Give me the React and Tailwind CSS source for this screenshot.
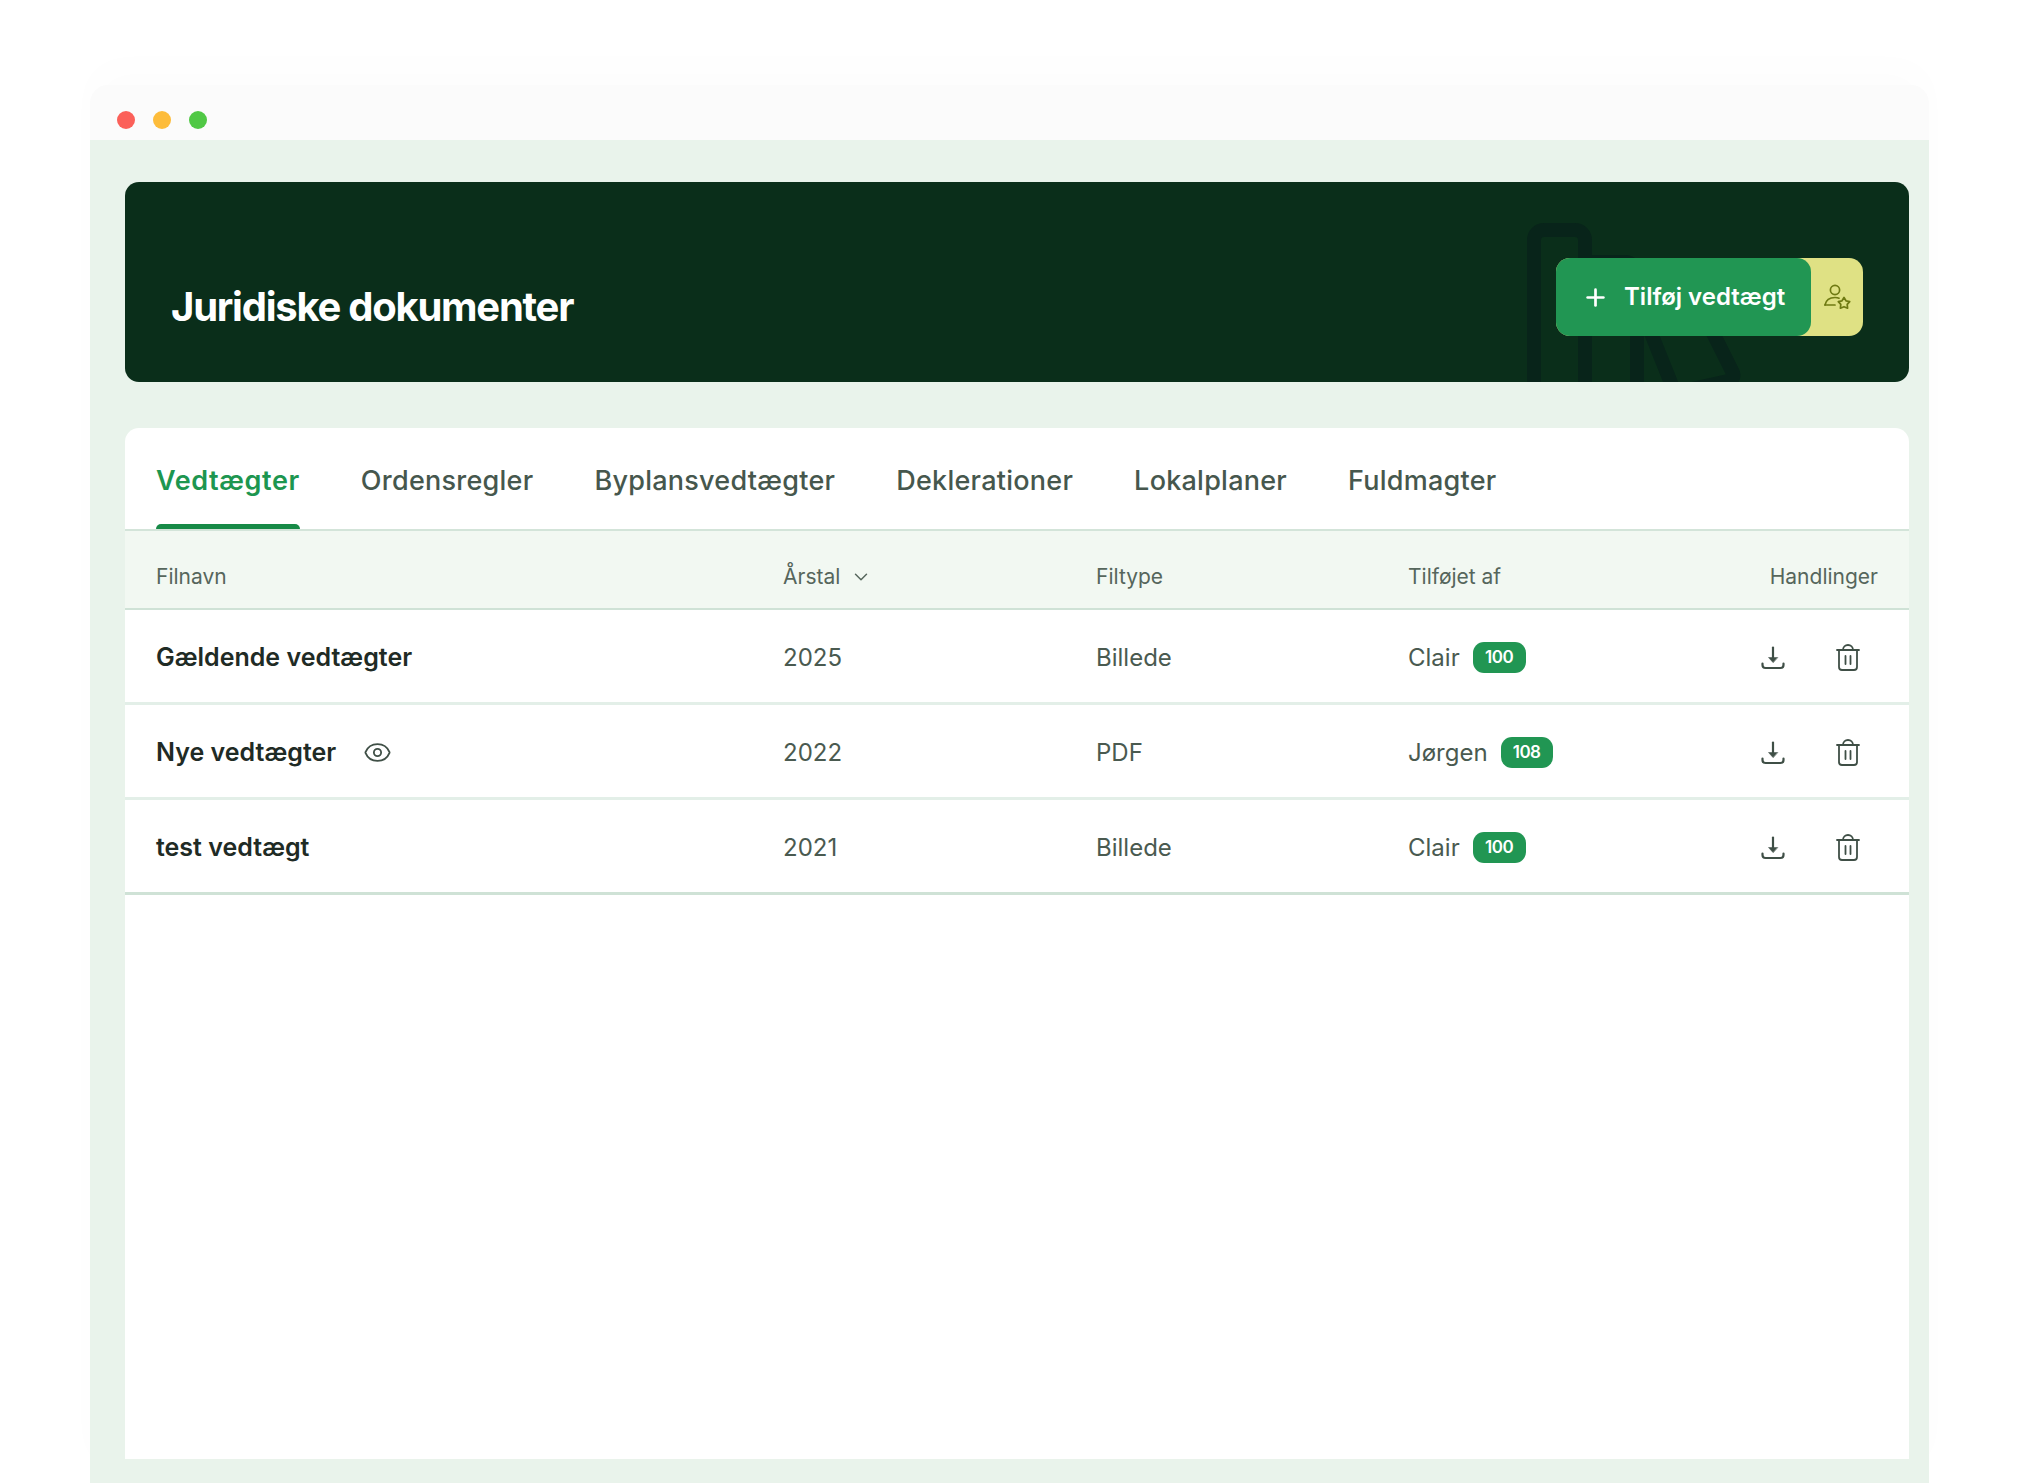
import { ChevronDown, Eye, Plus } from 'lucide-react';

const rows = [
  { navn: 'Gældende vedtægter', aar: '2025', type: 'Billede', af: 'Clair', nr: '100' },
  { navn: 'Nye vedtægter', aar: '2022', type: 'PDF', af: 'Jørgen', nr: '108', eye: true },
  { navn: 'test vedtægt', aar: '2021', type: 'Billede', af: 'Clair', nr: '100', last: true },
];

const tabs = ['Vedtægter', 'Ordensregler', 'Byplansvedtægter', 'Deklerationer', 'Lokalplaner', 'Fuldmagter'];

function DownloadIcon() {
  return (
    <svg width="24" height="24" viewBox="0 0 24 24" fill="none" stroke="#3f4f46" strokeWidth="2.2" strokeLinecap="round">
      <path d="M12 1.500v12" />
      <path d="M12 16.500l-4.500-5h9z" fill="#3f4f46" strokeWidth="0.5" strokeLinejoin="round" />
      <path d="M1.500 17.500v1.500a3 3 0 0 0 3 3h15a3 3 0 0 0 3-3v-1.500" />
    </svg>
  );
}

function TrashIcon() {
  return (
    <svg width="24" height="27" viewBox="0 0 24 27" fill="none" stroke="#3f4f46" strokeWidth="1.8" strokeLinecap="round" strokeLinejoin="round">
      <path d="M1 6h22" />
      <path d="M7 6a5 5 0 0 1 10 0" />
      <path d="M3 6v17a3 3 0 0 0 3 3h12a3 3 0 0 0 3-3V6" />
      <path d="M9.500 12v8M14.500 12v8" />
    </svg>
  );
}

function UserStarIcon() {
  return (
    <svg width="27" height="27" viewBox="0 0 27 27" fill="none" stroke="#6f7a12" strokeWidth="1.7" strokeLinecap="round" strokeLinejoin="round">
      <circle cx="11" cy="6" r="4.6" />
      <path d="M1 21c1-5 5-7.500 10-7.500 1.500 0 3 .2 4 .7" />
      <path d="M1 21h10" />
      <path d="M20 13.500l2 3.300 3.700.8-2.500 2.800.4 3.800-3.600-1.500-3.600 1.500.4-3.800-2.500-2.800 3.700-.8z" />
    </svg>
  );
}

function Badge({ nr }) {
  return (
    <span
      className={`flex h-[31px] items-center justify-center rounded-[11px] bg-[#219653] text-[17px] font-semibold tracking-[-0.5px] text-white ${
        nr === '108' ? 'w-[52px]' : 'w-[53px]'
      }`}
    >
      {nr}
    </span>
  );
}

export default function App() {
  return (
    <div className="h-[1484px] overflow-hidden bg-white pt-[85px] font-['Inter',sans-serif]">
      <div className="ml-[90px] w-[1839px] rounded-t-[18px] shadow-[0_-20px_40px_rgba(0,0,0,0.012)]">
        <div className="flex h-[55px] gap-[18px] rounded-t-[18px] bg-[#fbfbfb] pl-[27px] pt-[26px]">
          <span className="h-[18px] w-[18px] rounded-full bg-[#fb6059]" />
          <span className="h-[18px] w-[18px] rounded-full bg-[#fdbc3a]" />
          <span className="h-[18px] w-[18px] rounded-full bg-[#50c845]" />
        </div>

        <div className="flex h-[1343px] flex-col bg-[#e9f3eb] pb-[24px] pl-[35px] pr-[20px] pt-[42px]">
          <header className="relative flex h-[200px] shrink-0 items-center justify-between overflow-hidden rounded-[14px] bg-[#0a2e1a] pl-[46px] pr-[46px]">
            <h1 className="mt-[50px] text-[40px] font-bold tracking-[-1.25px] text-white">Juridiske dokumenter</h1>

            <svg className="absolute left-[1395px] top-[33px]" width="240" height="167" viewBox="0 0 240 167" fill="none" stroke="#08241a" strokeWidth="14" strokeLinejoin="round">
              <path d="M14 175V25a10 10 0 0 1 10-10h31a10 10 0 0 1 10 10v150" />
              <path d="M65 47h40a12 12 0 0 1 12 12v116" />
              <path d="M140 60l15-8 13 2 20 60" />
              <path d="M131 118l22 55M193 118l20 40q2 6-5 8l-40 9" />
            </svg>

            <div className="relative mt-[30px] flex h-[78px] w-[307px] rounded-[14px] bg-[#dfe184]">
              <button className="flex h-full w-[255px] items-center gap-[15px] rounded-[14px] bg-[#219653] pl-[26px] text-[24px] font-semibold text-white">
                <Plus size={27} strokeWidth={2.4} />
                Tilføj vedtægt
              </button>
              <div className="flex flex-1 items-center justify-center">
                <UserStarIcon />
              </div>
            </div>
          </header>

          <main className="mt-[46px] flex-1 rounded-t-[14px] bg-white">
            <nav className="flex h-[103px] gap-[61px] border-b-2 border-[#d3e4d9] px-[31px]">
              {tabs.map((t, i) => (
                <div
                  key={t}
                  className={`relative flex h-[101px] items-center pt-[6px] text-[27px] ${
                    i === 0 ? 'font-semibold tracking-[0.6px] text-[#1d9650]' : 'font-medium tracking-[0.25px] text-[#46574d]'
                  }`}
                >
                  {t}
                  {i === 0 && <span className="absolute bottom-0 left-0 right-0 h-[5px] rounded-t-[5px] bg-[#178a47]" />}
                </div>
              ))}
            </nav>

            <div className="grid h-[79px] grid-cols-[627px_313px_312px_1fr_auto] items-center border-b-2 border-[#cfe2d6] bg-[#f2f8f2] px-[31px] pt-[14px] text-[21px] text-[#56665c]">
              <span>Filnavn</span>
              <span className="flex items-center gap-[10px]">
                Årstal <ChevronDown size={22} strokeWidth={1.6} />
              </span>
              <span>Filtype</span>
              <span>Tilføjet af</span>
              <span className="text-right">Handlinger</span>
            </div>

            {rows.map((r) => (
              <div
                key={r.navn}
                className={`grid h-[95px] grid-cols-[627px_313px_312px_1fr_auto] items-center border-b-[3px] px-[31px] pt-[3px] text-[24px] text-[#4a5a50] ${
                  r.last ? 'border-[#cfe2d6]' : 'border-[#e3efe8]'
                }`}
              >
                <span className="flex items-center gap-[27px] text-[25px] font-semibold text-[#1f2b25]">
                  {r.navn}
                  {r.eye && <Eye size={29} strokeWidth={1.5} className="text-[#3f4f46]" />}
                </span>
                <span>{r.aar}</span>
                <span>{r.type}</span>
                <span className="flex items-center gap-[13px]">
                  {r.af} <Badge nr={r.nr} />
                </span>
                <span className="flex items-center justify-end gap-[51px] pr-[18px]">
                  <DownloadIcon />
                  <TrashIcon />
                </span>
              </div>
            ))}
          </main>
        </div>
      </div>
    </div>
  );
}
